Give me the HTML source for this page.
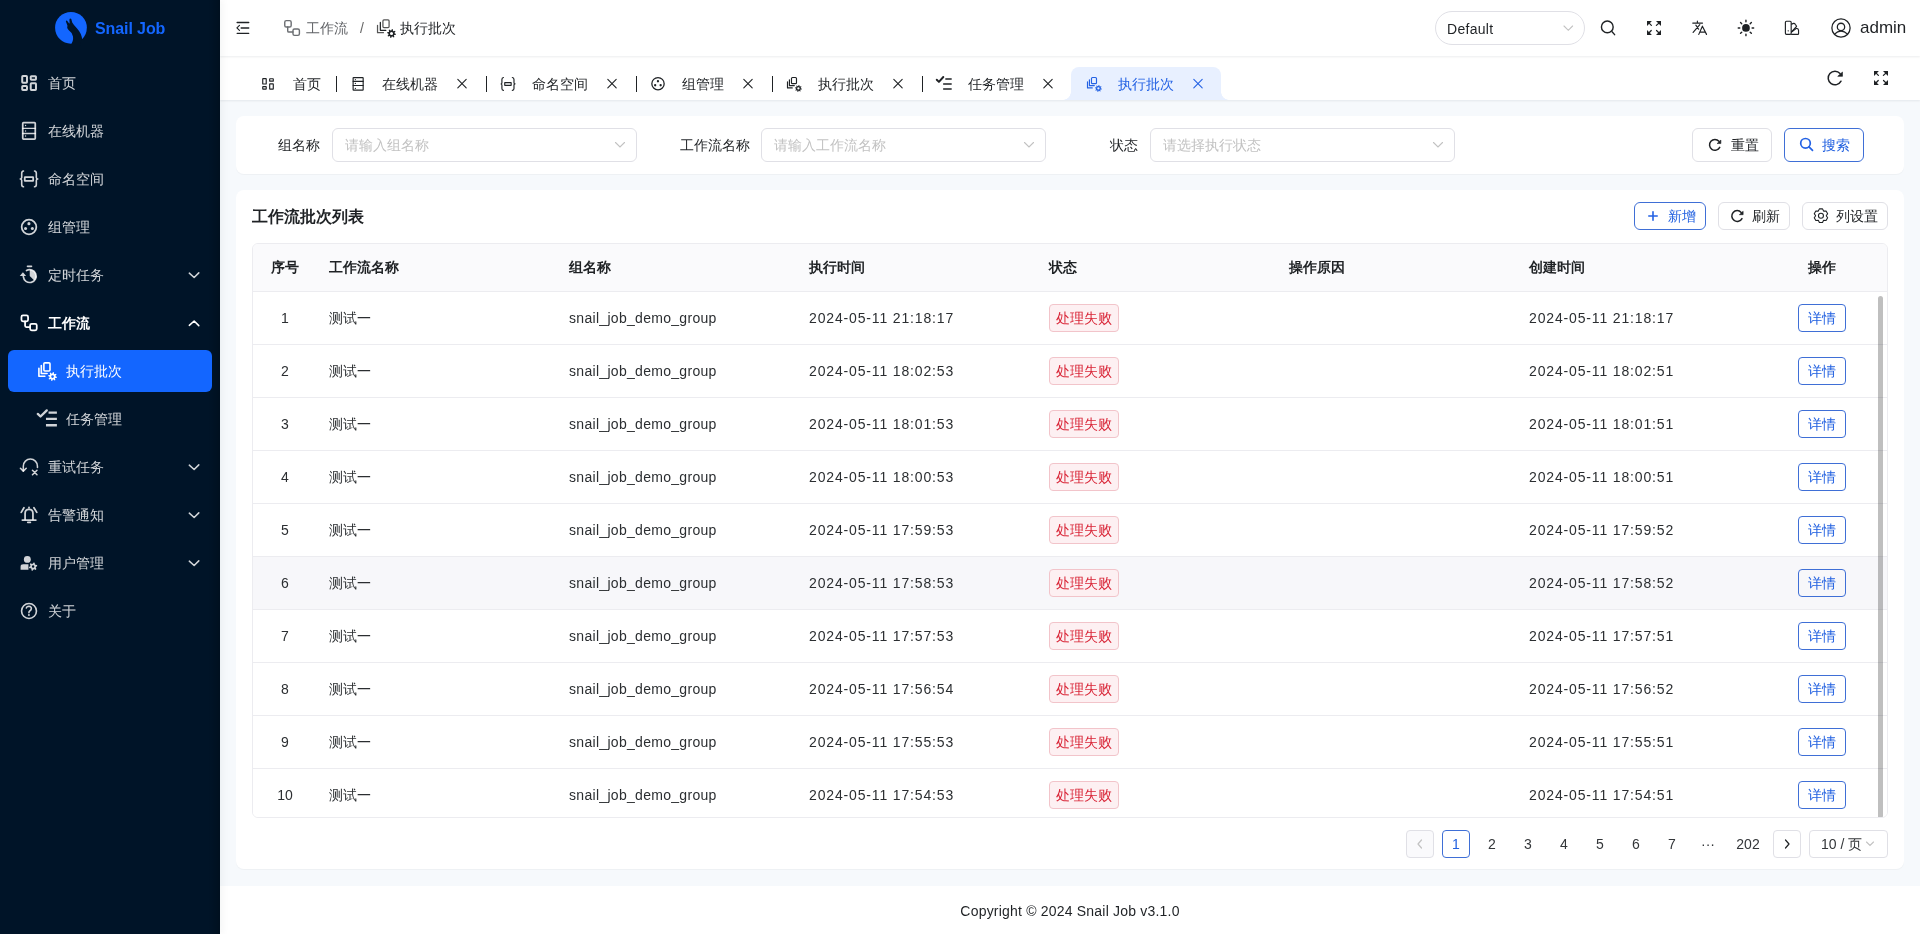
<!DOCTYPE html>
<html><head><meta charset="utf-8">
<style>
*{box-sizing:border-box;margin:0;padding:0}
html,body{-webkit-font-smoothing:antialiased;width:1920px;height:934px;overflow:hidden;font-family:"Liberation Sans",sans-serif;font-size:14px;color:#1f2225;background:#f6f9fc}
.abs{position:absolute}
#side{position:absolute;left:0;top:0;width:220px;height:934px;background:#001428 linear-gradient(to right,rgba(0,0,0,0) 208px,rgba(0,0,0,.22) 220px);box-shadow:2px 0 8px 0 rgba(29,35,41,.05);z-index:4}
#logotxt{position:absolute;left:95px;top:19px;font-size:16px;font-weight:bold;color:#1366ff;line-height:20px;letter-spacing:-.1px}
.mact{position:absolute;left:8px;width:204px;height:42px;border-radius:6px;background:#1366ff}
.mt{position:absolute;line-height:18px;font-size:14px;white-space:nowrap}
#main{position:absolute;left:220px;top:0;width:1700px;height:934px;background:#f6f9fc}
#hdr{position:absolute;left:0;top:0;width:1700px;height:56px;background:#fff;box-shadow:0 1px 2px rgba(0,21,41,.08);z-index:3}
#tabs{position:absolute;left:0;top:56px;width:1700px;height:44px;background:#fff;box-shadow:0 1px 2px rgba(0,21,41,.08);z-index:2}
.tt{position:absolute;top:18px;line-height:20px;font-size:14px;color:#1f2225;white-space:nowrap}
.tsep{position:absolute;top:20px;width:1px;height:16px;background:#1f2225}
#acttab{position:absolute;left:851px;top:11px;width:150px;height:33px;background:#e8f0ff;border-radius:8px 8px 0 0}
#acttab:before,#acttab:after{content:"";position:absolute;bottom:0;width:8px;height:8px;background:radial-gradient(circle at 0 0,transparent 8px,#e8f0ff 8.5px)}
#acttab:before{left:-8px;background:radial-gradient(circle at 0 0,transparent 7.5px,#e8f0ff 8px)}
#acttab:after{right:-8px;background:radial-gradient(circle at 100% 0,transparent 7.5px,#e8f0ff 8px)}
.card{position:absolute;background:#fff;border-radius:8px;box-shadow:0 1px 1px rgba(0,0,0,.035)}
.lbl{position:absolute;top:21px;line-height:16px;color:#1f2225;white-space:nowrap}
.inp{position:absolute;top:12px;height:34px;border:1px solid #e0e0e6;border-radius:6px;background:#fff}
.ph{position:absolute;left:12px;top:8px;line-height:16px;color:#c2c2c2;white-space:nowrap}
.btn{position:absolute;height:34px;border:1px solid #e0e0e6;border-radius:6px;background:#fff;line-height:32px;white-space:nowrap}
.btn.pri{border-color:#3f6fd6;color:#2160e0}
.sbtn{position:absolute;top:12px;height:28px;border:1px solid #e0e0e6;border-radius:6px;background:#fff;line-height:26px;white-space:nowrap}
.sbtn.pri{border-color:#3f6fd6;color:#2160e0}
#title{position:absolute;left:16px;top:17px;font-size:16px;font-weight:bold;line-height:20px;color:#1f2225}
#table{position:absolute;left:16px;top:53px;width:1636px;height:575px;border:1px solid #ececf0;border-radius:6px;overflow:hidden}
#thead{position:absolute;left:0;top:0;width:1634px;height:48px;background:#fafafc;border-bottom:1px solid #ececf0}
.th{position:absolute;top:15px;line-height:16px;font-weight:bold;color:#1f2225;white-space:nowrap}
.tr{position:absolute;left:0;width:1634px;height:53px;border-bottom:1px solid #ececf0;background:#fff}
.tr.hov{background:#f7f7fa}
.td{position:absolute;top:18px;line-height:16px;color:#2b2e31;white-space:nowrap}
.td.c{text-align:center}
.dt{letter-spacing:.85px}
.tag{position:absolute;top:12px;height:28px;width:70px;border:1px solid #f2c4ca;background:#fdf0f2;color:#d92638;border-radius:4px;text-align:center;line-height:26px;font-size:14px}
.dbtn{position:absolute;top:12px;width:48px;height:28px;border:1px solid #3f6fd6;color:#2160e0;border-radius:4px;text-align:center;line-height:26px}
#sb{position:absolute;left:1625px;top:52px;width:5px;height:523px;border-radius:3px;background:rgba(0,0,0,.25)}
.pg{position:absolute;top:640px;width:28px;height:28px;line-height:28px;text-align:center;color:#333639;border-radius:4px}
.pg.b{border:1px solid #e0e0e6;line-height:26px}
.pg.act{border:1px solid #3f6fd6;color:#2160e0;line-height:26px}
.pg.dis{background:#fafafc}
#psel{position:absolute;left:1573px;top:640px;width:79px;height:28px;border:1px solid #e0e0e6;border-radius:4px;line-height:26px;padding-left:11px;color:#333639}
#footer{position:absolute;left:0;top:886px;width:1700px;height:48px;background:#fff;text-align:center;line-height:50px;color:#1f2225;letter-spacing:.2px}
#ov{position:absolute;left:0;top:0;pointer-events:none;z-index:10}
</style></head><body>
<div id="root" style="position:absolute;left:0;top:0;width:1920px;height:934px;will-change:transform">
<div id="side">
<svg class="abs" style="left:52px;top:10px" width="38" height="36" viewBox="0 0 986 934">
<circle cx="492" cy="462" r="412" fill="#1366ff"/>
<path d="M360 300Q365 262 392 282L440 345Q452 355 458 335L452 255Q462 205 500 232L525 325Q565 395 650 480Q770 610 782 765L720 934L470 934Q565 810 545 690Q525 585 430 520Q375 475 400 400Z" fill="#001428"/>
</svg>
<div id="logotxt">Snail Job</div>
<div class="mt" style="left:48px;top:74px;color:rgba(255,255,255,.82);">首页</div><div class="mt" style="left:48px;top:122px;color:rgba(255,255,255,.82);">在线机器</div><div class="mt" style="left:48px;top:170px;color:rgba(255,255,255,.82);">命名空间</div><div class="mt" style="left:48px;top:218px;color:rgba(255,255,255,.82);">组管理</div><div class="mt" style="left:48px;top:266px;color:rgba(255,255,255,.82);">定时任务</div><div class="mt" style="left:48px;top:314px;color:#fff;font-weight:bold;">工作流</div><div class="mact" style="top:350px"></div><div class="mt" style="left:66px;top:362px;color:#fff;">执行批次</div><div class="mt" style="left:66px;top:410px;color:rgba(255,255,255,.82);">任务管理</div><div class="mt" style="left:48px;top:458px;color:rgba(255,255,255,.82);">重试任务</div><div class="mt" style="left:48px;top:506px;color:rgba(255,255,255,.82);">告警通知</div><div class="mt" style="left:48px;top:554px;color:rgba(255,255,255,.82);">用户管理</div><div class="mt" style="left:48px;top:602px;color:rgba(255,255,255,.82);">关于</div>
</div>
<div id="main">
 <div id="hdr">
  <div class="abs" style="left:86px;top:19px;line-height:18px;color:#606266">工作流</div>
  <div class="abs" style="left:140px;top:19px;line-height:18px;color:#666">/</div>
  <div class="abs" style="left:180px;top:19px;line-height:18px;color:#1f2225">执行批次</div>
  <div class="abs" style="left:1215px;top:11px;width:150px;height:34px;border:1px solid #e0e0e6;border-radius:17px;background:#fff"></div>
  <div class="abs" style="left:1227px;top:20px;line-height:18px;color:#1f2225;letter-spacing:.3px">Default</div>
  <div class="abs" style="left:1640px;top:18px;line-height:20px;font-size:17px;color:#1f2225">admin</div>
 </div>
 <div id="tabs">
  <div id="acttab"></div>
  <div class="tt" style="left:73px">首页</div><div class="tsep" style="left:116px"></div><div class="tt" style="left:162px">在线机器</div><div class="tsep" style="left:266px"></div><div class="tt" style="left:312px">命名空间</div><div class="tsep" style="left:416px"></div><div class="tt" style="left:462px">组管理</div><div class="tsep" style="left:552px"></div><div class="tt" style="left:598px">执行批次</div><div class="tsep" style="left:702px"></div><div class="tt" style="left:748px">任务管理</div>
  <div class="tt" style="left:898px;color:#2462e4">执行批次</div>
 </div>
 <div class="card" style="left:16px;top:116px;width:1668px;height:58px">
  <div class="lbl" style="left:42px">组名称</div>
  <div class="inp" style="left:96px;width:305px"><div class="ph">请输入组名称</div></div>
  <div class="lbl" style="left:444px">工作流名称</div>
  <div class="inp" style="left:525px;width:285px"><div class="ph">请输入工作流名称</div></div>
  <div class="lbl" style="left:874px">状态</div>
  <div class="inp" style="left:914px;width:305px"><div class="ph">请选择执行状态</div></div>
  <div class="btn" style="left:1456px;top:12px;width:80px;padding-left:38px">重置</div>
  <div class="btn pri" style="left:1548px;top:12px;width:80px;padding-left:37px">搜索</div>
 </div>
 <div class="card" style="left:16px;top:190px;width:1668px;height:679px">
  <div id="title">工作流批次列表</div>
  <div class="sbtn pri" style="left:1398px;width:72px;padding-left:33px">新增</div>
  <div class="sbtn" style="left:1482px;width:72px;padding-left:33px">刷新</div>
  <div class="sbtn" style="left:1566px;width:86px;padding-left:33px">列设置</div>
  <div id="table">
   <div id="thead">
    <div class="th" style="left:18px">序号</div>
    <div class="th" style="left:76px">工作流名称</div>
    <div class="th" style="left:316px">组名称</div>
    <div class="th" style="left:556px">执行时间</div>
    <div class="th" style="left:796px">状态</div>
    <div class="th" style="left:1036px">操作原因</div>
    <div class="th" style="left:1276px">创建时间</div>
    <div class="th" style="left:1555px">操作</div>
   </div>
   <div class="tr" style="top:48px">
<div class="td c" style="left:0;width:64px;">1</div>
<div class="td" style="left:76px">测试一</div>
<div class="td" style="left:316px;letter-spacing:.3px">snail_job_demo_group</div>
<div class="td dt" style="left:556px">2024-05-11 21:18:17</div>
<div class="tag" style="left:796px">处理失败</div>
<div class="td dt" style="left:1276px">2024-05-11 21:18:17</div>
<div class="dbtn" style="left:1545px">详情</div>
</div><div class="tr" style="top:101px">
<div class="td c" style="left:0;width:64px;">2</div>
<div class="td" style="left:76px">测试一</div>
<div class="td" style="left:316px;letter-spacing:.3px">snail_job_demo_group</div>
<div class="td dt" style="left:556px">2024-05-11 18:02:53</div>
<div class="tag" style="left:796px">处理失败</div>
<div class="td dt" style="left:1276px">2024-05-11 18:02:51</div>
<div class="dbtn" style="left:1545px">详情</div>
</div><div class="tr" style="top:154px">
<div class="td c" style="left:0;width:64px;">3</div>
<div class="td" style="left:76px">测试一</div>
<div class="td" style="left:316px;letter-spacing:.3px">snail_job_demo_group</div>
<div class="td dt" style="left:556px">2024-05-11 18:01:53</div>
<div class="tag" style="left:796px">处理失败</div>
<div class="td dt" style="left:1276px">2024-05-11 18:01:51</div>
<div class="dbtn" style="left:1545px">详情</div>
</div><div class="tr" style="top:207px">
<div class="td c" style="left:0;width:64px;">4</div>
<div class="td" style="left:76px">测试一</div>
<div class="td" style="left:316px;letter-spacing:.3px">snail_job_demo_group</div>
<div class="td dt" style="left:556px">2024-05-11 18:00:53</div>
<div class="tag" style="left:796px">处理失败</div>
<div class="td dt" style="left:1276px">2024-05-11 18:00:51</div>
<div class="dbtn" style="left:1545px">详情</div>
</div><div class="tr" style="top:260px">
<div class="td c" style="left:0;width:64px;">5</div>
<div class="td" style="left:76px">测试一</div>
<div class="td" style="left:316px;letter-spacing:.3px">snail_job_demo_group</div>
<div class="td dt" style="left:556px">2024-05-11 17:59:53</div>
<div class="tag" style="left:796px">处理失败</div>
<div class="td dt" style="left:1276px">2024-05-11 17:59:52</div>
<div class="dbtn" style="left:1545px">详情</div>
</div><div class="tr hov" style="top:313px">
<div class="td c" style="left:0;width:64px;">6</div>
<div class="td" style="left:76px">测试一</div>
<div class="td" style="left:316px;letter-spacing:.3px">snail_job_demo_group</div>
<div class="td dt" style="left:556px">2024-05-11 17:58:53</div>
<div class="tag" style="left:796px">处理失败</div>
<div class="td dt" style="left:1276px">2024-05-11 17:58:52</div>
<div class="dbtn" style="left:1545px">详情</div>
</div><div class="tr" style="top:366px">
<div class="td c" style="left:0;width:64px;">7</div>
<div class="td" style="left:76px">测试一</div>
<div class="td" style="left:316px;letter-spacing:.3px">snail_job_demo_group</div>
<div class="td dt" style="left:556px">2024-05-11 17:57:53</div>
<div class="tag" style="left:796px">处理失败</div>
<div class="td dt" style="left:1276px">2024-05-11 17:57:51</div>
<div class="dbtn" style="left:1545px">详情</div>
</div><div class="tr" style="top:419px">
<div class="td c" style="left:0;width:64px;">8</div>
<div class="td" style="left:76px">测试一</div>
<div class="td" style="left:316px;letter-spacing:.3px">snail_job_demo_group</div>
<div class="td dt" style="left:556px">2024-05-11 17:56:54</div>
<div class="tag" style="left:796px">处理失败</div>
<div class="td dt" style="left:1276px">2024-05-11 17:56:52</div>
<div class="dbtn" style="left:1545px">详情</div>
</div><div class="tr" style="top:472px">
<div class="td c" style="left:0;width:64px;">9</div>
<div class="td" style="left:76px">测试一</div>
<div class="td" style="left:316px;letter-spacing:.3px">snail_job_demo_group</div>
<div class="td dt" style="left:556px">2024-05-11 17:55:53</div>
<div class="tag" style="left:796px">处理失败</div>
<div class="td dt" style="left:1276px">2024-05-11 17:55:51</div>
<div class="dbtn" style="left:1545px">详情</div>
</div><div class="tr" style="top:525px">
<div class="td c" style="left:0;width:64px;">10</div>
<div class="td" style="left:76px">测试一</div>
<div class="td" style="left:316px;letter-spacing:.3px">snail_job_demo_group</div>
<div class="td dt" style="left:556px">2024-05-11 17:54:53</div>
<div class="tag" style="left:796px">处理失败</div>
<div class="td dt" style="left:1276px">2024-05-11 17:54:51</div>
<div class="dbtn" style="left:1545px">详情</div>
</div>
   <div id="sb"></div>
  </div>
  <div class="pg b dis" style="left:1170px"></div>
  <div class="pg act" style="left:1206px">1</div>
  <div class="pg" style="left:1242px">2</div>
  <div class="pg" style="left:1278px">3</div>
  <div class="pg" style="left:1314px">4</div>
  <div class="pg" style="left:1350px">5</div>
  <div class="pg" style="left:1386px">6</div>
  <div class="pg" style="left:1422px">7</div>
  <div class="pg" style="left:1458px">···</div>
  <div class="pg" style="left:1494px;width:36px">202</div>
  <div class="pg b" style="left:1537px"></div>
  <div id="psel">10 / 页</div>
 </div>
 <div id="footer">Copyright © 2024 Snail Job v3.1.0</div>
</div>
<svg id="ov" width="1920" height="934" viewBox="0 0 1920 934">
<g transform="translate(14 70) scale(0.032119914346895075)" stroke="rgba(255,255,255,.82)" fill="none" stroke-linecap="round" stroke-linejoin="round"><g stroke-width="62"><rect x="256" y="186" width="148" height="213" rx="22"/><rect x="521" y="191" width="163" height="113" rx="22"/><rect x="256" y="501" width="148" height="118" rx="22"/><rect x="521" y="411" width="163" height="208" rx="22"/></g></g><g transform="translate(14 116) scale(0.032119914346895075)" stroke="rgba(255,255,255,.82)" fill="none" stroke-linecap="round" stroke-linejoin="round"><g stroke-width="55"><rect x="272" y="207" width="390" height="511" rx="25"/><path d="M272 385H662M272 545H662" stroke-width="45"/></g><g fill="rgba(255,255,255,.82)" stroke="none"><circle cx="360" cy="298" r="22"/><circle cx="360" cy="468" r="22"/><circle cx="360" cy="625" r="22"/></g></g><g transform="translate(14 164) scale(0.032119914346895075)" stroke="rgba(255,255,255,.82)" fill="none" stroke-linecap="round" stroke-linejoin="round"><g stroke-width="50"><path d="M295 220Q240 225 240 290V420Q240 462 195 465Q240 468 240 510V640Q240 705 295 710"/><path d="M640 220Q695 225 695 290V420Q695 462 740 465Q695 468 695 510V640Q695 705 640 710"/><rect x="335" y="410" width="262" height="117" rx="8" stroke-width="55"/></g></g><g transform="translate(14 212) scale(0.032119914346895075)" stroke="rgba(255,255,255,.82)" fill="none" stroke-linecap="round" stroke-linejoin="round"><circle cx="467" cy="467" r="228" stroke-width="55"/><g fill="rgba(255,255,255,.82)" stroke="none"><circle cx="465" cy="362" r="48"/><circle cx="360" cy="515" r="48"/><circle cx="572" cy="515" r="48"/></g></g><g transform="translate(14 260) scale(0.032119914346895075)" stroke="rgba(255,255,255,.82)" fill="none" stroke-linecap="round" stroke-linejoin="round"><g stroke-width="52"><path d="M420 198H545"/><path d="M390 327A200 200 0 1 1 290 520"/></g><g fill="rgba(255,255,255,.82)" stroke="none"><path d="M490 500L490 300A200 200 0 0 1 632 642Z"/><path d="M180 500L278 385L378 500Z"/></g></g><g transform="translate(180 260) scale(0.032119914346895075)" stroke="rgba(255,255,255,.82)" fill="none" stroke-linecap="round" stroke-linejoin="round"><path d="M290 410L440 545L585 400" stroke-width="48"/></g><g transform="translate(14 308) scale(0.032119914346895075)" stroke="#fff" fill="none" stroke-linecap="round" stroke-linejoin="round"><g stroke-width="55"><rect x="232" y="232" width="206" height="181" rx="48"/><rect x="502" y="492" width="206" height="201" rx="48"/><path d="M345 413V555Q345 592 385 592H502"/></g></g><g transform="translate(180 308) scale(0.032119914346895075)" stroke="#fff" fill="none" stroke-linecap="round" stroke-linejoin="round"><path d="M290 540L440 405L585 550" stroke-width="48"/></g><g transform="translate(32 356) scale(0.032119914346895075)" stroke="#fff" fill="none" stroke-linecap="round" stroke-linejoin="round"><g stroke-width="50"><path d="M215 385V630H400"/><path d="M290 295V545H470"/><rect x="370" y="215" width="190" height="250" rx="30"/></g><path fill-rule="evenodd" d="M653.72,500.67 L680.64,506.03 L684.78,556.22 L700.27,566.56 L748.22,551.18 L763.47,574.00 L730.91,612.42 L734.54,630.69 L779.33,653.72 L773.97,680.64 L723.78,684.78 L713.44,700.27 L728.82,748.22 L706.00,763.47 L667.58,730.91 L649.31,734.54 L626.28,779.33 L599.36,773.97 L595.22,723.78 L579.73,713.44 L531.78,728.82 L516.53,706.00 L549.09,667.58 L545.46,649.31 L500.67,626.28 L506.03,599.36 L556.22,595.22 L566.56,579.73 L551.18,531.78 L574.00,516.53 L612.42,549.09 L630.69,545.46Z M682,640 A42 42 0 1 0 598,640 A42 42 0 1 0 682,640Z" fill="#fff" stroke="none"/></g><g transform="translate(32 404) scale(0.032119914346895075)" stroke="rgba(255,255,255,.82)" fill="none" stroke-linecap="round" stroke-linejoin="round"><g stroke-width="72"><path d="M180 310L265 390L460 200"/></g><g stroke-width="72" stroke-linecap="butt"><path d="M515 268H775M435 465H775M435 662H775"/></g></g><g transform="translate(14 452) scale(0.032119914346895075)" stroke="rgba(255,255,255,.82)" fill="none" stroke-linecap="round" stroke-linejoin="round"><g stroke-width="48"><path d="M290 590V440A220 220 0 0 1 730 440V480"/><path d="M200 505L290 595L380 505"/><path d="M575 570L715 710M715 570L575 710"/></g></g><g transform="translate(180 452) scale(0.032119914346895075)" stroke="rgba(255,255,255,.82)" fill="none" stroke-linecap="round" stroke-linejoin="round"><path d="M290 410L440 545L585 400" stroke-width="48"/></g><g transform="translate(14 500) scale(0.032119914346895075)" stroke="rgba(255,255,255,.82)" fill="none" stroke-linecap="round" stroke-linejoin="round"><g stroke-width="55"><path d="M345 600V420Q345 290 467 290Q590 290 590 420V600"/><path d="M260 625H680"/><path d="M430 695H510"/><path d="M467 230V245"/><path d="M225 385L310 240M620 240L710 385"/></g></g><g transform="translate(180 500) scale(0.032119914346895075)" stroke="rgba(255,255,255,.82)" fill="none" stroke-linecap="round" stroke-linejoin="round"><path d="M290 410L440 545L585 400" stroke-width="48"/></g><g transform="translate(14 548) scale(0.032119914346895075)" stroke="rgba(255,255,255,.82)" fill="none" stroke-linecap="round" stroke-linejoin="round"><g fill="rgba(255,255,255,.82)" stroke="none"><circle cx="415" cy="355" r="108"/><path d="M205 680V580Q205 505 290 505H450V680Z"/></g><path fill-rule="evenodd" d="M611.97,449.11 L644.75,457.90 L649.79,506.60 L666.40,523.21 L715.10,528.25 L723.89,561.03 L684.23,589.75 L678.15,612.44 L698.14,657.14 L674.14,681.14 L629.44,661.15 L606.75,667.23 L578.03,706.89 L545.25,698.10 L540.21,649.40 L523.60,632.79 L474.90,627.75 L466.11,594.97 L505.77,566.25 L511.85,543.56 L491.86,498.86 L515.86,474.86 L560.56,494.85 L583.25,488.77Z M633,578 A38 38 0 1 0 557,578 A38 38 0 1 0 633,578Z" fill="rgba(255,255,255,.82)" stroke="none"/></g><g transform="translate(180 548) scale(0.032119914346895075)" stroke="rgba(255,255,255,.82)" fill="none" stroke-linecap="round" stroke-linejoin="round"><path d="M290 410L440 545L585 400" stroke-width="48"/></g><g transform="translate(14 596) scale(0.032119914346895075)" stroke="rgba(255,255,255,.82)" fill="none" stroke-linecap="round" stroke-linejoin="round"><circle cx="467" cy="467" r="232" stroke-width="50"/><g stroke-width="50"><path d="M385 370Q400 320 465 320Q545 325 540 395Q535 440 490 465Q465 480 465 520"/></g><circle cx="465" cy="590" r="30" fill="rgba(255,255,255,.82)" stroke="none"/></g><g transform="translate(231 16) scale(0.02569593147751606)" stroke="#1f2225" fill="none" stroke-linecap="round" stroke-linejoin="round"><path d="M240 255H690M395 470H690M240 675H690" stroke-width="55"/><path d="M330 365L230 462L330 560" stroke-width="45"/></g>
<g transform="translate(280 16) scale(0.02569593147751606)" stroke="#6b6e72" fill="none" stroke-linecap="round" stroke-linejoin="round"><g stroke-width="55"><rect x="185" y="180" width="250" height="250" rx="60"/><rect x="505" y="505" width="250" height="250" rx="60"/><path d="M300 430V580Q300 625 345 625H505"/></g></g><g transform="translate(372 14) scale(0.02569593147751606)" stroke="#1f2225" fill="none" stroke-linecap="round" stroke-linejoin="round"><g stroke-width="48"><path d="M215 440V725H445" stroke="#555"/><path d="M325 330V635H540"/><rect x="425" y="230" width="240" height="300" rx="40" stroke="#555"/></g><path fill-rule="evenodd" d="M777.15,585.84 L810.80,592.54 L816.57,654.17 L836.13,667.24 L895.28,648.98 L914.34,677.51 L874.83,725.17 L879.42,748.24 L934.16,777.15 L927.46,810.80 L865.83,816.57 L852.76,836.13 L871.02,895.28 L842.49,914.34 L794.83,874.83 L771.76,879.42 L742.85,934.16 L709.20,927.46 L703.43,865.83 L683.87,852.76 L624.72,871.02 L605.66,842.49 L645.17,794.83 L640.58,771.76 L585.84,742.85 L592.54,709.20 L654.17,703.43 L667.24,683.87 L648.98,624.72 L677.51,605.66 L725.17,645.17 L748.24,640.58Z M820,760 A60 60 0 1 0 700,760 A60 60 0 1 0 820,760Z" fill="#1f2225" stroke="none"/></g>
<g stroke="#c2c2c2" fill="none" stroke-width="1.1" stroke-linecap="round"><path d="M1564 26L1568.3 30.3L1572.6 26"/></g>
<g transform="translate(1596 16) scale(0.02569593147751606)" stroke="#1f2225" fill="none" stroke-linecap="round" stroke-linejoin="round"><circle cx="440" cy="425" r="228" stroke-width="55"/><path d="M625 615L725 725" stroke-width="55"/></g><g transform="translate(1642 16) scale(0.02569593147751606)" stroke="#1f2225" fill="none" stroke-linecap="round" stroke-linejoin="round"><g fill="#1f2225" stroke="none"><path d="M195 195H385L195 385Z"/><path d="M740 195H545L740 385Z"/><path d="M195 735H385L195 545Z"/><path d="M740 735H545L740 545Z"/></g><path d="M250 250L365 365M685 250L560 365M250 680L360 565M685 680L565 565" stroke-width="48"/></g><g transform="translate(1688 16) scale(0.02569593147751606)" stroke="#1f2225" fill="none" stroke-linecap="round" stroke-linejoin="round"><g stroke-width="45"><path d="M185 275H565M365 200V270M305 355L415 515M460 335L200 640M420 715L560 395L720 715M470 625H680"/></g></g><g transform="translate(1734 16) scale(0.02569593147751606)" stroke="#1f2225" fill="none" stroke-linecap="round" stroke-linejoin="round"><circle cx="465" cy="465" r="150" fill="#1f2225" stroke="none"/><g stroke-width="55"><path d="M465 165V225M465 705V765M165 465H225M705 465H765M255 255L300 300M630 630L675 675M255 675L300 630M630 300L675 255"/></g></g><g transform="translate(1780 16) scale(0.02569593147751606)" stroke="#1f2225" fill="none" stroke-linecap="round" stroke-linejoin="round"><g stroke-width="45"><rect x="210" y="205" width="225" height="510" rx="40"/><path d="M450 315L530 288Q570 280 600 330L645 400L455 610"/><path d="M450 625L640 478Q720 485 722 560V690Q722 715 695 715H450"/></g><circle cx="320" cy="578" r="28" fill="#1f2225" stroke="none"/></g><g transform="translate(1829 16) scale(0.02569593147751606)" stroke="#1f2225" fill="none" stroke-linecap="round" stroke-linejoin="round"><g stroke-width="50"><circle cx="467" cy="467" r="355"/><circle cx="467" cy="425" r="143"/><path d="M215 705Q330 590 467 590Q605 590 720 705"/></g></g>
<g stroke="#1f2225" fill="none" stroke-width="1.5" stroke-linecap="round">
</g>
<path d="M1840.05 73.45A6.8 6.8 0 1 0 1841.00 81.19" stroke="#1f2225" stroke-width="1.5" fill="none" stroke-linecap="round"/><path d="M1837.72,76.37 L1842.48,76.37 L1842.48,72.02Z" fill="#1f2225" stroke="#1f2225" stroke-width="0.60" stroke-linejoin="round"/>
<g transform="translate(1869 66) scale(0.02569593147751606)" stroke="#1f2225" fill="none" stroke-linecap="round" stroke-linejoin="round"><g fill="#1f2225" stroke="none"><path d="M195 195H385L195 385Z"/><path d="M740 195H545L740 385Z"/><path d="M195 735H385L195 545Z"/><path d="M740 735H545L740 545Z"/></g><path d="M250 250L365 365M685 250L560 365M250 680L360 565M685 680L565 565" stroke-width="48"/></g><g transform="translate(256 72) scale(0.02569593147751606)" stroke="#1f2225" fill="none" stroke-linecap="round" stroke-linejoin="round"><g stroke-width="45" stroke-linejoin="miter"><rect x="262" y="257" width="136" height="211" rx="12"/><rect x="532" y="262" width="141" height="96" rx="12"/><rect x="262" y="572" width="136" height="96" rx="12"/><rect x="532" y="462" width="141" height="206" rx="12"/></g></g><g transform="translate(346 72) scale(0.02569593147751606)" stroke="#1f2225" fill="none" stroke-linecap="round" stroke-linejoin="round"><rect x="277" y="217" width="391" height="491" rx="20" stroke-width="45"/><path d="M277 365H668M277 525H668" stroke-width="40"/><g fill="#1f2225" stroke="none"><circle cx="365" cy="295" r="24"/><circle cx="365" cy="445" r="24"/><circle cx="365" cy="640" r="24"/></g></g><path d="M457.8 79.3L466.2 87.9M466.2 79.3L457.8 87.9" stroke="#1f2225" stroke-width="1.1" stroke-linecap="round"/><g transform="translate(496 72) scale(0.02569593147751606)" stroke="#1f2225" fill="none" stroke-linecap="round" stroke-linejoin="round"><g stroke-width="45"><path d="M290 215Q230 225 230 290V420Q230 460 195 465Q230 470 230 510V640Q230 705 290 715"/><path d="M635 215Q700 225 700 290V420Q700 460 740 465Q700 470 700 510V640Q700 705 635 715"/><rect x="340" y="415" width="250" height="105" rx="6"/></g></g><path d="M607.8 79.3L616.2 87.9M616.2 79.3L607.8 87.9" stroke="#1f2225" stroke-width="1.1" stroke-linecap="round"/><g transform="translate(646 72) scale(0.02569593147751606)" stroke="#1f2225" fill="none" stroke-linecap="round" stroke-linejoin="round"><circle cx="467" cy="455" r="240" stroke-width="50"/><g fill="#1f2225" stroke="none"><circle cx="465" cy="360" r="45"/><circle cx="357" cy="515" r="45"/><circle cx="570" cy="515" r="45"/></g></g><path d="M743.8 79.3L752.2 87.9M752.2 79.3L743.8 87.9" stroke="#1f2225" stroke-width="1.1" stroke-linecap="round"/><g transform="translate(783 72) scale(0.02569593147751606)" stroke="#1f2225" fill="none" stroke-linecap="round" stroke-linejoin="round"><g stroke-width="45"><path d="M175 380V620H360"/><path d="M250 300V530H440"/><rect x="330" y="215" width="195" height="240" rx="40"/></g><path fill-rule="evenodd" d="M613.23,505.65 L639.19,510.81 L643.37,558.86 L658.36,568.88 L704.36,554.36 L719.06,576.36 L688.04,613.29 L691.56,630.98 L734.35,653.23 L729.19,679.19 L681.14,683.37 L671.12,698.36 L685.64,744.36 L663.64,759.06 L626.71,728.04 L609.02,731.56 L586.77,774.35 L560.81,769.19 L556.63,721.14 L541.64,711.12 L495.64,725.64 L480.94,703.64 L511.96,666.71 L508.44,649.02 L465.65,626.77 L470.81,600.81 L518.86,596.63 L528.88,581.64 L514.36,535.64 L536.36,520.94 L573.29,551.96 L590.98,548.44Z M645,640 A45 45 0 1 0 555,640 A45 45 0 1 0 645,640Z" fill="#1f2225" stroke="none"/></g><path d="M893.8 79.3L902.2 87.9M902.2 79.3L893.8 87.9" stroke="#1f2225" stroke-width="1.1" stroke-linecap="round"/><g transform="translate(932 72) scale(0.02569593147751606)" stroke="#1f2225" fill="none" stroke-linecap="round" stroke-linejoin="round"><path d="M185 300L270 385L440 195" stroke-width="75"/><path d="M540 270H745M455 465H745M455 660H745" stroke-width="60"/></g><path d="M1043.8 79.3L1052.2 87.9M1052.2 79.3L1043.8 87.9" stroke="#1f2225" stroke-width="1.1" stroke-linecap="round"/><g transform="translate(1083 72) scale(0.02569593147751606)" stroke="#2462e4" fill="none" stroke-linecap="round" stroke-linejoin="round"><g stroke-width="45"><path d="M175 380V620H360"/><path d="M250 300V530H440"/><rect x="330" y="215" width="195" height="240" rx="40"/></g><path fill-rule="evenodd" d="M613.23,505.65 L639.19,510.81 L643.37,558.86 L658.36,568.88 L704.36,554.36 L719.06,576.36 L688.04,613.29 L691.56,630.98 L734.35,653.23 L729.19,679.19 L681.14,683.37 L671.12,698.36 L685.64,744.36 L663.64,759.06 L626.71,728.04 L609.02,731.56 L586.77,774.35 L560.81,769.19 L556.63,721.14 L541.64,711.12 L495.64,725.64 L480.94,703.64 L511.96,666.71 L508.44,649.02 L465.65,626.77 L470.81,600.81 L518.86,596.63 L528.88,581.64 L514.36,535.64 L536.36,520.94 L573.29,551.96 L590.98,548.44Z M645,640 A45 45 0 1 0 555,640 A45 45 0 1 0 645,640Z" fill="#2462e4" stroke="none"/></g><path d="M1193.8 79.3L1202.2 87.9M1202.2 79.3L1193.8 87.9" stroke="#2462e4" stroke-width="1.1" stroke-linecap="round"/><g stroke="#c2c2c2" fill="none" stroke-width="1.1" stroke-linecap="round"><path d="M615.5 142.5L620 147L624.5 142.5"/><path d="M1024.5 142.5L1029 147L1033.5 142.5"/><path d="M1433.5 142.5L1438 147L1442.5 142.5"/></g><path d="M1718.96 141.24A5.4 5.4 0 1 0 1719.72 147.39" stroke="#1f2225" stroke-width="1.5" fill="none" stroke-linecap="round"/><path d="M1717.11,143.55 L1720.89,143.55 L1720.89,140.10Z" fill="#1f2225" stroke="#1f2225" stroke-width="0.60" stroke-linejoin="round"/><g stroke="#2462e4" fill="none" stroke-width="1.7" stroke-linecap="round"><circle cx="1805.5" cy="143.3" r="4.8"/><path d="M1809 146.8L1812.5 150.3"/></g><g stroke="#2462e4" stroke-width="1.6" stroke-linecap="round"><path d="M1653 211.8V220.2M1648.8 216H1657.2"/></g><path d="M1741.21 212.39A5.4 5.4 0 1 0 1741.97 218.54" stroke="#1f2225" stroke-width="1.5" fill="none" stroke-linecap="round"/><path d="M1739.36,214.70 L1743.14,214.70 L1743.14,211.25Z" fill="#1f2225" stroke="#1f2225" stroke-width="0.60" stroke-linejoin="round"/><g stroke="#1f2225" fill="none" stroke-width="1.3" stroke-linejoin="round"></g><path d="M1819.38,208.88 L1822.52,208.88 L1823.60,211.11 L1826.07,210.93 L1827.64,213.65 L1826.25,215.70 L1827.64,217.75 L1826.07,220.47 L1823.60,220.29 L1822.52,222.52 L1819.38,222.52 L1818.30,220.29 L1815.83,220.47 L1814.26,217.75 L1815.65,215.70 L1814.26,213.65 L1815.83,210.93 L1818.30,211.11Z" fill="none" stroke="#1f2225" stroke-width="1.1" stroke-linejoin="round"/><circle cx="1820.95" cy="215.7" r="2.5" fill="none" stroke="#1f2225" stroke-width="1.1"/><path d="M1421.5 840L1418 844L1421.5 848" stroke="#c2c2c2" stroke-width="1.2" fill="none" stroke-linecap="round" stroke-linejoin="round"/><path d="M1785.5 840L1789 844L1785.5 848" stroke="#1f2225" stroke-width="1.2" fill="none" stroke-linecap="round" stroke-linejoin="round"/><path d="M1866.5 842L1870 845.5L1873.5 842" stroke="#c2c2c2" stroke-width="1.1" fill="none" stroke-linecap="round"/>
</svg>
</div>
</body></html>
